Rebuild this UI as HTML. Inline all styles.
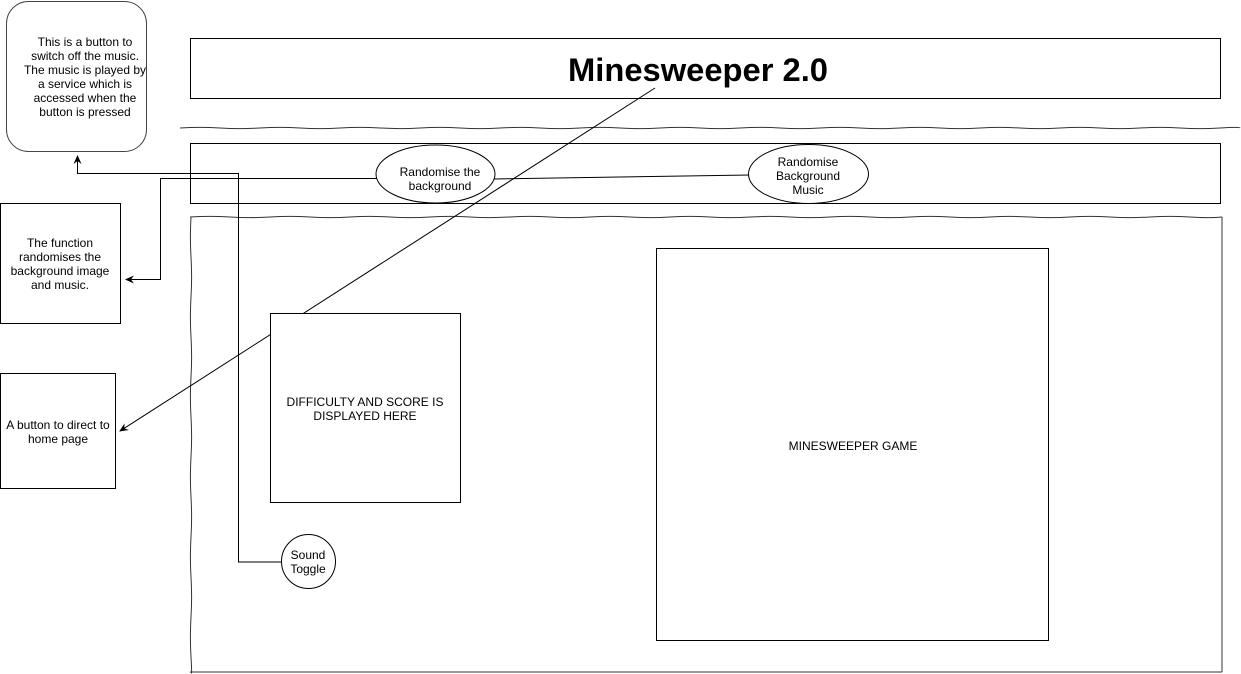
<!DOCTYPE html>
<html><head><meta charset="utf-8"><style>
html,body{margin:0;padding:0;background:#fff;width:1241px;height:674px;overflow:hidden}
svg{display:block}
text{font-family:"Liberation Sans",Arial,sans-serif;font-size:12px;fill:#000}
</style></head><body>
<svg width="1241" height="674" viewBox="0 0 1241 674" xmlns="http://www.w3.org/2000/svg">
<defs><marker id="a" markerWidth="10" markerHeight="10" refX="8" refY="5" orient="auto" markerUnits="userSpaceOnUse"><path d="M0,1 L9,5 L0,9 L3,5 Z" fill="#000"/></marker></defs>
<g fill="none" stroke="#000" stroke-width="1">
<rect x="6.5" y="1.5" width="140" height="150" rx="22" stroke="#444"/>
<rect x="190.5" y="38.5" width="1030" height="60"/>
<path d="M180,128 q20,-1.2 40,0 t40,0 t40,0 t40,0 t40,0 t40,0 t40,0 t40,0 t40,0 t40,0 t40,0 t40,0 t40,0 t40,0 t40,0 t40,0 t40,0 t40,0 t40,0 t40,0 t40,0 t40,0 t40,0 t40,0 t40,0 t40,0 t20,0" stroke="#333"/>
<rect x="190.5" y="143.5" width="1030" height="60"/>
<path d="M190,217 q20,-1.2 40,0 t40,0 t40,0 t40,0 t40,0 t40,0 t40,0 t40,0 t40,0 t40,0 t40,0 t40,0 t40,0 t40,0 t40,0 t40,0 t40,0 t40,0 t40,0 t40,0 t40,0 t40,0 t40,0 t40,0 t40,0 t32,0 M1222,217 L1222,672 M190,672 L1222,672 M191,217 q-1.2,20 0,40 t0,40 t0,40 t0,40 t0,40 t0,40 t0,40 t0,40 t0,40 t0,40 t0,40 t0,15" stroke="#333"/>
<rect x="0.5" y="203.5" width="120" height="120"/>
<rect x="0.5" y="373.5" width="115" height="115"/>
<path d="M281,562 H238.5 V173.5 H77.5 V156" marker-end="url(#a)"/>
<path d="M385,178.5 H160.5 V279.5 H126" marker-end="url(#a)"/>
<path d="M494,179 L750,175"/>
<path d="M655,88 L120,431" marker-end="url(#a)"/>
<rect x="270.5" y="313.5" width="190" height="189" fill="#fff"/>
<rect x="656.5" y="248.5" width="392" height="392" fill="#fff"/>
<ellipse cx="435.5" cy="174" rx="59.5" ry="29" fill="#fff"/>
<ellipse cx="808.5" cy="174" rx="60" ry="29.5" fill="#fff"/>
<circle cx="308.5" cy="561.5" r="27" fill="#fff"/>
</g>
<text x="698" y="81" text-anchor="middle" textLength="260" lengthAdjust="spacingAndGlyphs" style="font-size:32px;font-weight:bold">Minesweeper 2.0</text>
<g text-anchor="middle">
<text x="85" y="46">This is  a button to</text>
<text x="85" y="60">switch off the music.</text>
<text x="85" y="74">The music is played by</text>
<text x="85" y="88">a service which is</text>
<text x="85" y="102">accessed when the</text>
<text x="85" y="116">button is pressed</text>
<text x="60" y="247">The function</text>
<text x="60" y="261">randomises the</text>
<text x="60" y="275">background image</text>
<text x="60" y="289">and music.</text>
<text x="58" y="429">A button to direct to</text>
<text x="58" y="443">home page</text>
<text x="440" y="176">Randomise the</text>
<text x="440" y="190">background</text>
<text x="808" y="166">Randomise</text>
<text x="808" y="180">Background</text>
<text x="808" y="194">Music</text>
<text x="365" y="406">DIFFICULTY AND SCORE IS</text>
<text x="365" y="420">DISPLAYED HERE</text>
<text x="853" y="450">MINESWEEPER GAME</text>
<text x="308" y="559">Sound</text>
<text x="308" y="573">Toggle</text>
</g>
</svg>
</body></html>
